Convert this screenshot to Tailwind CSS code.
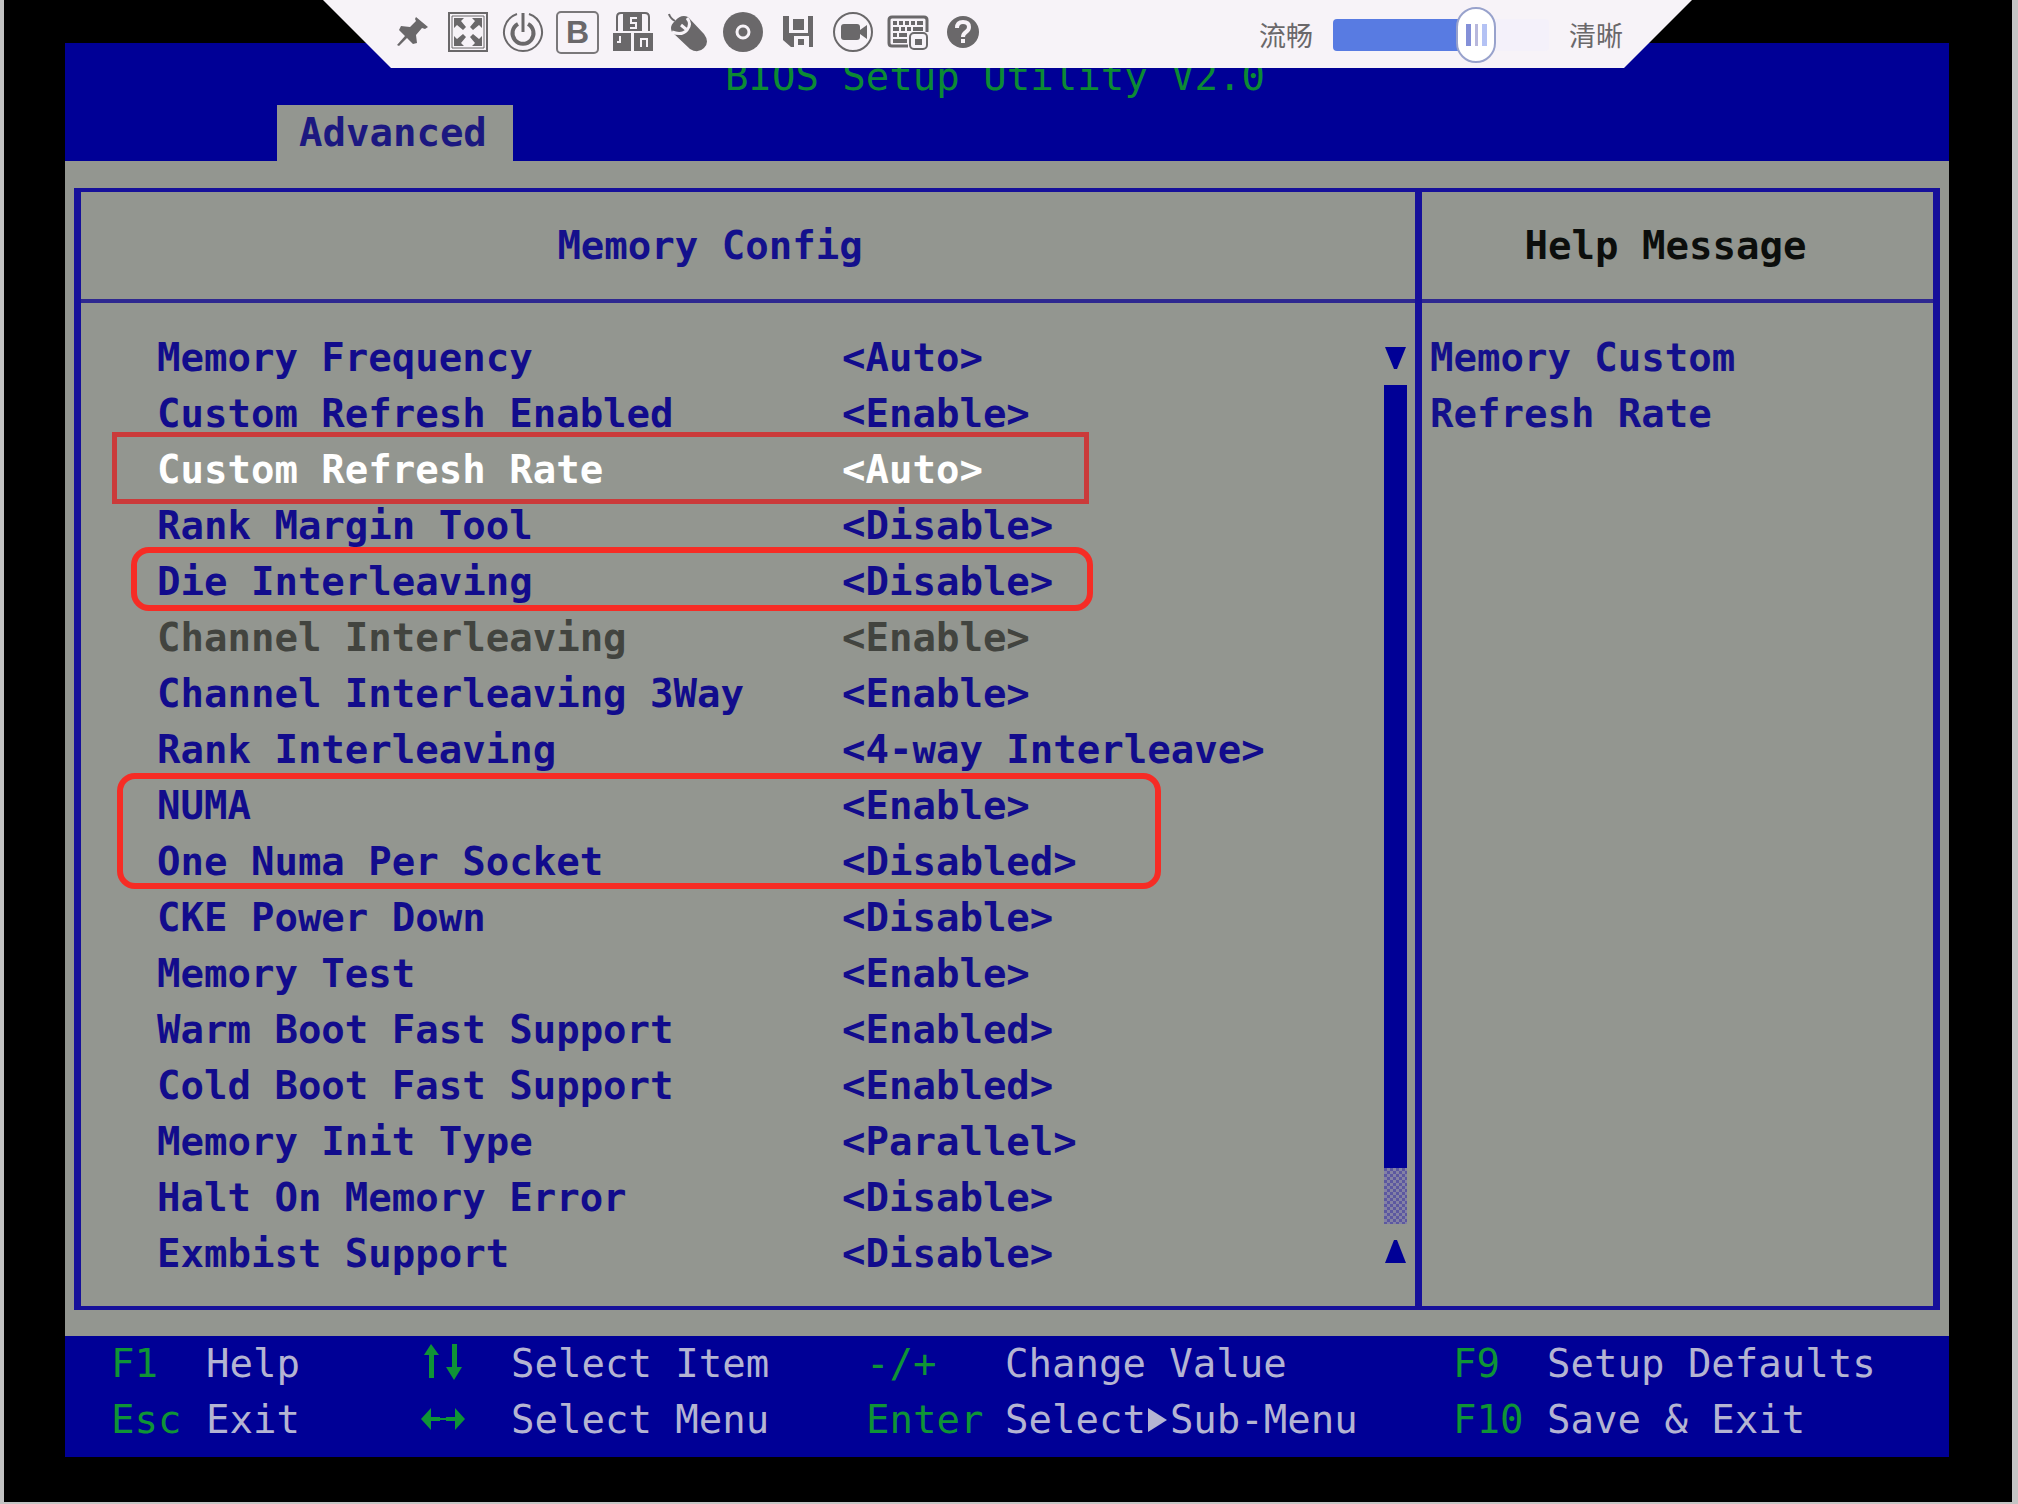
<!DOCTYPE html>
<html lang="en">
<head>
<meta charset="utf-8">
<title>BIOS Setup Utility</title>
<script src="https://cdn.jsdelivr.net/npm/@tailwindcss/browser@4"></script>
</head>
<body class="bg-black">
<div class="relative min-h-screen border-l-4 border-r-[6px] border-b-2 border-[#c4c4c4] bg-black pt-[43px] pr-[63px] pb-[45px] pl-[61px] font-['DejaVu_Sans_Mono','Liberation_Mono',monospace] text-[39px] leading-[56px] whitespace-nowrap">

  <header class="flex flex-col bg-[#000096] pt-[6px]">
    <h1 class="pr-6 text-center text-[#0c8a34]">BIOS Setup Utility V2.0</h1>
    <nav class="flex pl-[212px]"><a href="#advanced" class="bg-[#939690] pr-[26px] pl-[22px] font-bold text-[#1c1880]">Advanced</a></nav>
  </header>

  <main id="advanced" class="bg-[#939690] px-[9px] pt-[27px] pb-[26px]">
    <div class="grid grid-cols-[1334fr_518fr] border-x-[7px] border-y-4 border-[#16109a]">
      <section class="flex flex-col">
        <h2 class="border-b-4 border-[#2e2890] py-[26px] pr-[76px] text-center font-bold leading-[55px] text-[#14108c]">Memory Config</h2>
        <div class="flex pt-[27px] pb-6">
          <div class="relative flex-1">
            <ul class="font-bold text-[#120c8c] [&_select]:block [&_select]:h-14 [&>li]:grid [&>li]:grid-cols-[685px_1fr] [&>li]:pl-[76px] [&_select]:appearance-none [&_select]:justify-self-start [&_select]:opacity-100">
              <li><label for="s1">Memory Frequency</label><select id="s1"><option>&lt;Auto&gt;</option></select></li>
              <li><label for="s2">Custom Refresh Enabled</label><select id="s2"><option>&lt;Enable&gt;</option></select></li>
              <li class="text-white"><label for="s3">Custom Refresh Rate</label><select id="s3"><option>&lt;Auto&gt;</option></select></li>
              <li><label for="s4">Rank Margin Tool</label><select id="s4"><option>&lt;Disable&gt;</option></select></li>
              <li><label for="s5">Die Interleaving</label><select id="s5"><option>&lt;Disable&gt;</option></select></li>
              <li class="text-[#42443f]"><label for="s6">Channel Interleaving</label><select id="s6" disabled><option>&lt;Enable&gt;</option></select></li>
              <li><label for="s7">Channel Interleaving 3Way</label><select id="s7"><option>&lt;Enable&gt;</option></select></li>
              <li><label for="s8">Rank Interleaving</label><select id="s8"><option>&lt;4-way Interleave&gt;</option></select></li>
              <li><label for="s9">NUMA</label><select id="s9"><option>&lt;Enable&gt;</option></select></li>
              <li><label for="s10">One Numa Per Socket</label><select id="s10"><option>&lt;Disabled&gt;</option></select></li>
              <li><label for="s11">CKE Power Down</label><select id="s11"><option>&lt;Disable&gt;</option></select></li>
              <li><label for="s12">Memory Test</label><select id="s12"><option>&lt;Enable&gt;</option></select></li>
              <li><label for="s13">Warm Boot Fast Support</label><select id="s13"><option>&lt;Enabled&gt;</option></select></li>
              <li><label for="s14">Cold Boot Fast Support</label><select id="s14"><option>&lt;Enabled&gt;</option></select></li>
              <li><label for="s15">Memory Init Type</label><select id="s15"><option>&lt;Parallel&gt;</option></select></li>
              <li><label for="s16">Halt On Memory Error</label><select id="s16"><option>&lt;Disable&gt;</option></select></li>
              <li><label for="s17">Exmbist Support</label><select id="s17"><option>&lt;Disable&gt;</option></select></li>
            </ul>
            <!-- highlight frames -->
            <div class="pointer-events-none absolute top-[102px] left-[31px] h-[72px] w-[977px] border-[5px] border-[#cb3a3a]"></div>
            <div class="pointer-events-none absolute top-[217px] left-[50px] h-16 w-[962px] rounded-[18px] border-[6px] border-[#f62c25]"></div>
            <div class="pointer-events-none absolute top-[443px] left-[36px] h-[116px] w-[1044px] rounded-[18px] border-[6px] border-[#f62c25]"></div>
          </div>
          <!-- list scroll bar -->
          <div class="mr-2 flex w-[23px] flex-col text-[#000096]">
            <svg class="h-[55px]" viewBox="0 0 23 55" fill="currentColor" aria-hidden="true"><path d="M1 17h21L13 39h-3z"/></svg>
            <div class="flex-1 bg-[#000096]"></div>
            <svg class="h-14" viewBox="0 0 23 56" aria-hidden="true"><defs><pattern id="dither" width="6" height="6" patternUnits="userSpaceOnUse"><path fill="#5c58a0" d="M0 0h3v3H0zM3 3h3v3H3z"/></pattern></defs><path fill="#8482a4" d="M0 0h23v56H0z"/><path fill="url(#dither)" d="M0 0h23v56H0z"/></svg>
            <svg class="h-[58px]" viewBox="0 0 23 58" fill="currentColor" aria-hidden="true"><path d="M1 39h21L13 16h-3z"/></svg>
          </div>
        </div>
      </section>
      <aside class="flex flex-col border-l-[7px] border-[#16109a]">
        <h2 class="border-b-4 border-[#2e2890] py-[26px] pr-6 text-center font-bold leading-[55px] text-[#0c0e0c]">Help Message</h2>
        <p class="pt-[27px] pl-2 font-bold text-[#14108c]">Memory Custom<br>Refresh Rate</p>
      </aside>
    </div>
  </main>

  <footer class="grid grid-cols-[310fr_445fr_587fr_496fr] bg-[#000096] pb-[9px] pl-[46px] text-[#b4b4d2] [&_dt]:text-[#0f9436]">
    <dl class="grid grid-cols-[95px_1fr]"><dt>F1</dt><dd>Help</dd><dt>Esc</dt><dd>Exit</dd></dl>
    <dl class="grid grid-cols-[90px_1fr]">
      <dt class="flex items-center"><svg class="h-10 w-11" viewBox="0 0 44 40" fill="currentColor" role="img" aria-label="Up and down"><path d="M10 0l8 11h-5v23H8V11H3zM31 0h5v23h5l-8 13-8-13h6z"/></svg></dt><dd>Select Item</dd>
      <dt class="flex items-center"><svg class="h-10 w-11" viewBox="0 0 44 40" fill="currentColor" role="img" aria-label="Left and right"><path d="M0 19L10 8v9h9v4h-9v9zM44 19L34 8v9h-9v4h9v9zM19 18h6v2h-6z"/></svg></dt><dd>Select Menu</dd>
    </dl>
    <dl class="grid grid-cols-[139px_1fr]"><dt>-/+</dt><dd>Change Value</dd><dt>Enter</dt><dd class="flex items-center">Select<svg class="h-7 w-6" viewBox="0 0 24 28" fill="currentColor" role="img" aria-label="opens"><path d="M2 2l19 12L2 26z"/></svg>Sub-Menu</dd></dl>
    <dl class="grid grid-cols-[94px_1fr]"><dt>F9</dt><dd>Setup Defaults</dd><dt>F10</dt><dd>Save &amp; Exit</dd></dl>
  </footer>

  <!-- remote console toolbar -->
  <div class="absolute top-0 right-[320px] left-[319px] flex h-[68px] items-start justify-between bg-[#f7f3f8] pr-[69px] pl-[62px] font-['Noto_Sans_CJK_SC',sans-serif] text-[27px] text-[#6a686a] [clip-path:polygon(0_0,100%_0,calc(100%-68px)_100%,68px_100%)]">
    <div class="flex h-16 items-center [&>button]:flex [&>button]:w-[55px] [&>button]:justify-center [&_svg]:size-[42px]">
      <button type="button" aria-label="Pin"><svg viewBox="0 0 42 42" fill="currentColor"><path d="M24 6l12 10-3 2-3-1-6 7 1 8-4 1-6-6-8 8-2-1 8-9-6-6 2-4 9 1 6-6-1-2z"/></svg></button>
      <button type="button" aria-label="Full screen"><svg viewBox="0 0 42 42" fill="none" stroke="currentColor"><path stroke-width="2" d="M2 2h38v38H2z"/><path stroke-width="1" d="M5 5h32v32H5z"/><path fill="currentColor" stroke="none" d="M7 7h10l-3 3 5 6-3 3-6-5-3 3zM35 7v10l-3-3-6 5-3-3 5-6-3-3zM7 35V25l3 3 6-5 3 3-5 6 3 3zM35 35H25l3-3-5-6 3-3 6 5 3-3z"/></svg></button>
      <button type="button" aria-label="Power"><svg viewBox="0 0 42 42" fill="none" stroke="currentColor"><path stroke-width="2" d="M15 3a19 19 0 1 0 12 0"/><path stroke-width="4" d="M16 13a10.500 10.500 0 1 0 10 0"/><path stroke-width="3" d="M21 2v19"/></svg></button>
      <button type="button" aria-label="Boot options" class="font-['Liberation_Sans',sans-serif] font-bold"><span class="flex size-[43px] items-center justify-center rounded-[5px] border-2 border-[#7a787a] text-[32px] leading-none">B</span></button>
      <button type="button" aria-label="Key combination"><svg viewBox="0 0 42 42" fill="currentColor"><path fill="none" stroke="currentColor" stroke-width="2" d="M5 20V6q0-4 4-4h24q4 0 4 4v14"/><path d="M11 3h19v17H11zM1 22h18v18H1zM22 22h19v18H22z"/><path fill="none" stroke="#f7f3f8" stroke-width="2" d="M25 7h-6v5h5v5h-6M8 25v6H5M29 36v-8h6v8"/></svg></button>
      <button type="button" aria-label="Mouse"><svg viewBox="0 0 42 42" fill="currentColor"><path d="M8 10Q14 3 21 6l16 17q6 8 0 14t-14 1L5 21q-3-6 3-11z"/><path fill="none" stroke="#f7f3f8" stroke-width="3" d="M5 21q10 4 15-2 5-6 0-12M14 14l6 5"/><path fill="none" stroke="currentColor" stroke-width="2" d="M2 3q1 4 6 7"/></svg></button>
      <button type="button" aria-label="Virtual disc"><svg viewBox="0 0 42 42" fill="currentColor"><circle cx="21" cy="21" r="20"/><circle cx="21" cy="21" r="6" fill="none" stroke="#f7f3f8" stroke-width="3"/></svg></button>
      <button type="button" aria-label="Virtual floppy"><svg viewBox="0 0 42 42" fill="currentColor"><path d="M6 5h6v17h19V5h5v31h-4V25H17v11h-3l-8-7z"/><path d="M16 8h11v11H16zM21 28h6v6h-6z"/></svg></button>
      <button type="button" aria-label="Record"><svg viewBox="0 0 42 42" fill="currentColor"><circle cx="21" cy="21" r="19" fill="none" stroke="currentColor" stroke-width="2"/><rect x="9" y="13" width="19" height="16" rx="3"/><path d="M28 19l7-5v14l-7-5z"/></svg></button>
      <button type="button" aria-label="Soft keyboard"><svg viewBox="0 0 42 42" fill="currentColor"><path fill="none" stroke="currentColor" stroke-width="3" d="M21 35H5q-3 0-3-3V9q0-3 3-3h32q3 0 3 3v12"/><path d="M6 10h4v4H6zM12 10h4v4h-4zM18 10h4v4h-4zM24 10h4v4h-4zM30 10h6v4h-6zM6 16h6v4H6zM14 16h4v4h-4zM20 16h4v4h-4zM26 16h10v4H26zM6 22h4v4H6zM12 22h8v4h-8zM6 28h14v4H6z"/><rect x="23" y="22" width="17" height="16" rx="4" fill="#f7f3f8" stroke="currentColor" stroke-width="2"/><path d="M28 28h7v6h-7z"/></svg></button>
      <button type="button" aria-label="Help"><svg viewBox="0 0 42 42"><circle cx="21" cy="21" r="16" fill="currentColor"/><path fill="none" stroke="#f7f3f8" stroke-width="4" d="M15 17q0-6 6-6t6 5q0 3-3 5t-3 5M21 28v4"/></svg></button>
    </div>
    <div class="flex h-[70px] items-center gap-5">
      <label for="quality">流畅</label>
      <input id="quality" type="range" min="0" max="100" value="70" class="h-14 w-[216px] appearance-none bg-transparent [&::-webkit-slider-runnable-track]:h-8 [&::-webkit-slider-runnable-track]:rounded-[4px] [&::-webkit-slider-runnable-track]:bg-[linear-gradient(90deg,#587be2_65%,#f4f1fa_65%)] [&::-webkit-slider-thumb]:-mt-3 [&::-webkit-slider-thumb]:h-14 [&::-webkit-slider-thumb]:w-10 [&::-webkit-slider-thumb]:appearance-none [&::-webkit-slider-thumb]:rounded-full [&::-webkit-slider-thumb]:border-2 [&::-webkit-slider-thumb]:border-[#98a2cc] [&::-webkit-slider-thumb]:bg-white [&::-webkit-slider-thumb]:bg-[linear-gradient(90deg,transparent_8px,#8490d8_8px,#8490d8_13px,transparent_13px,transparent_17px,#b8b8dc_17px,#b8b8dc_20px,transparent_20px,transparent_24px,#b4c2f4_24px,#b4c2f4_29px,transparent_29px)] [&::-webkit-slider-thumb]:bg-size-[100%_22px] [&::-webkit-slider-thumb]:bg-center [&::-webkit-slider-thumb]:bg-no-repeat">
      <label for="quality">清晰</label>
    </div>
  </div>
</div>
</body>
</html>
